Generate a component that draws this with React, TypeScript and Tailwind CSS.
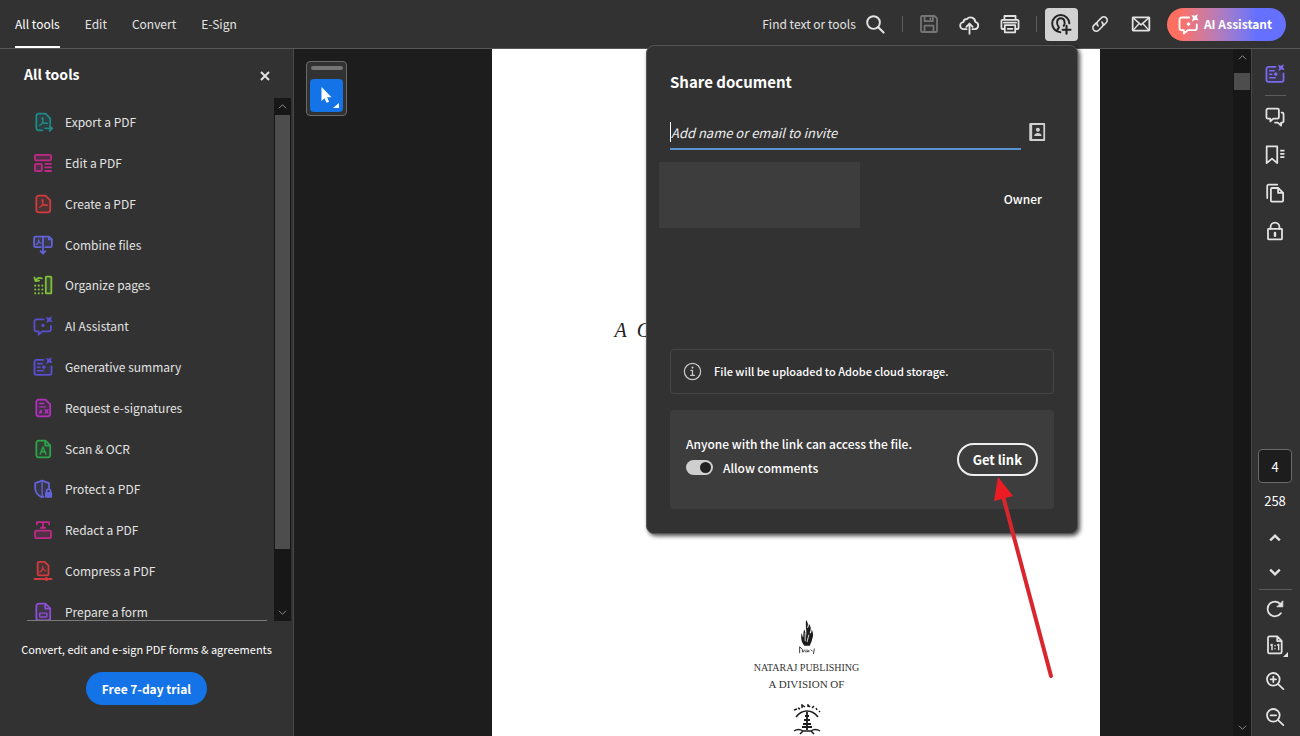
import { useState, type ReactNode } from "react";

const DOC = "M5 1.5h6.2l4.3 4.3v8.7a2 2 0 0 1-2 2H5a2 2 0 0 1-2-2v-11a2 2 0 0 1 2-2z";
const SPARK = "M11.6.8l2.6.8L17 .2l-.8 2.8 1.4 2.6-2.8-.6-2.8 1.4.8-2.9z";
const ACRO = "M5.8 12.2c2.2-1 3.7-4 3.2-6.6-.1-.8-.9-.7-.9.1.1 2.6 2 4.7 4.3 4.9.8 0 .8-.9 0-.9-2.3-.2-5 .9-6.6 2.5z";

function Icon({ children, className = "size-5" }: { children: ReactNode; className?: string }) {
  return (
    <svg viewBox="0 0 18 18" fill="none" stroke="currentColor" strokeWidth="1.6" strokeLinecap="round" strokeLinejoin="round" className={className} aria-hidden="true">
      {children}
    </svg>
  );
}

function ChatSparkIcon({ className }: { className?: string }) {
  return (
    <Icon className={className}>
      <path d="M9.5 3H3.2a1.9 1.9 0 0 0-1.9 1.9v7a1.9 1.9 0 0 0 1.9 1.9H5v3l3.5-3h5.7a1.9 1.9 0 0 0 1.9-1.9V9" />
      <path d={SPARK} fill="currentColor" stroke="none" />
      <path d="M9 6.8l1.8 1.8L9 10.400 7.200 8.600z" fill="currentColor" stroke="none" />
    </Icon>
  );
}

function SummaryIcon({ className }: { className?: string }) {
  return (
    <Icon className={className}>
      <path d="M9.5 2.500H3.200a1.900 1.900 0 0 0-1.900 1.900v9.700A1.900 1.900 0 0 0 3.200 16h11.600a1.900 1.900 0 0 0 1.900-1.900V8.500" fill="currentColor" fillOpacity=".12" />
      <path d="M4.200 6h4M4.200 9.200h2M4.200 12.400h5" strokeWidth="1.400" />
      <path d={SPARK} fill="currentColor" stroke="none" />
      <path d="M9.700 7.300l1.900 1.900-1.900 1.900-1.900-1.900z" fill="currentColor" stroke="none" />
    </Icon>
  );
}

const tools = [
  {
    label: "Export a PDF",
    color: "text-[#1f8a8a]",
    icon: (
      <Icon>
        <path d="M8.500 16.500H5a2 2 0 0 1-2-2v-11a2 2 0 0 1 2-2h6.200l4.300 4.300v5" fill="currentColor" fillOpacity=".15" />
        <path d={ACRO} strokeWidth="1" />
        <path d="M11 14.800h6M15 12.600l2.200 2.200L15 17" />
      </Icon>
    ),
  },
  {
    label: "Edit a PDF",
    color: "text-[#c2288a]",
    icon: (
      <Icon>
        <rect x="1.700" y="1.700" width="14.600" height="5" rx="1.300" fill="currentColor" fillOpacity=".2" />
        <rect x="1.700" y="9.700" width="6.300" height="6.600" rx="1.300" fill="currentColor" fillOpacity=".2" />
        <path d="M11 9.800h5.300M11 13h5.300M11 16.200h5.300" />
      </Icon>
    ),
  },
  {
    label: "Create a PDF",
    color: "text-[#d23b3f]",
    icon: (
      <Icon>
        <path d={DOC} fill="currentColor" fillOpacity=".15" />
        <path d={ACRO} strokeWidth="1" />
      </Icon>
    ),
  },
  {
    label: "Combine files",
    color: "text-[#6263d8]",
    icon: (
      <Icon>
        <path d="M7 11H2.300A1.300 1.300 0 0 1 1 9.700v-7A1.300 1.300 0 0 1 2.300 1.400H9V9M11 11h4.700A1.300 1.300 0 0 0 17 9.700V4l-2.600-2.600H9" fill="currentColor" fillOpacity=".15" />
        <path d="M3 8.700c1.500-.9 2.300-2.500 2.100-4.400.2 1.900 1 2.900 2.100 3.200M14 1.600v2.600h2.800" strokeWidth="1" />
        <path d="M9 9v7.500M6.800 14.500L9 16.800l2.200-2.300" />
      </Icon>
    ),
  },
  {
    label: "Organize pages",
    color: "text-[#7fc13a]",
    icon: (
      <Icon>
        <rect x="11.500" y="1.500" width="5" height="15" rx=".6" fill="currentColor" fillOpacity=".15" />
        <path d="M2.500 5.200C3.500 2.800 5.500 2.200 8 3M1.300 2.200l.9 3.200 3.300-.3" />
        <path d="M2 9.500v.1M5.200 9.500v.1M8.400 9.500v.1M2 13v.1M5.200 13v.1M8.400 13v.1M2 16.400v.1M5.200 16.400v.1M8.400 16.400v.1" strokeWidth="1.900" />
      </Icon>
    ),
  },
  { label: "AI Assistant", color: "text-[#5a4fd0]", icon: <ChatSparkIcon className="size-5" /> },
  { label: "Generative summary", color: "text-[#5a4fd0]", icon: <SummaryIcon className="size-5" /> },
  {
    label: "Request e-signatures",
    color: "text-[#b130bd]",
    icon: (
      <Icon>
        <path d={DOC} fill="currentColor" fillOpacity=".15" />
        <path d="M6 5h3.500M6 8h5M6 13.500c1-3 2-3 1.300-.2M11 10.500l2.500 3M13.500 10.500l-2.500 3" strokeWidth="1.300" />
      </Icon>
    ),
  },
  {
    label: "Scan & OCR",
    color: "text-[#2fa34b]",
    icon: (
      <Icon>
        <path d={DOC} fill="currentColor" fillOpacity=".15" />
        <path d="M11 1.600v4.300h4.400" />
        <path d="M6.500 13.500L9 7.200l2.600 6.300M7.400 11.500h3.300" strokeWidth="1.300" />
      </Icon>
    ),
  },
  {
    label: "Protect a PDF",
    color: "text-[#6263d8]",
    icon: (
      <Icon>
        <path d="M9.500 15.700l-1.300.8C4 14.500 2 12 2 8.500V3.700l6.200-2.300 6.200 2.300v4.600" fill="currentColor" fillOpacity=".12" />
        <path d="M8.200 1.400v15" strokeWidth="1.200" />
        <rect x="10.800" y="11.800" width="6.400" height="5" rx=".6" fill="currentColor" stroke="none" />
        <path d="M12.300 12v-1.200a1.700 1.700 0 0 1 3.400 0V12" />
      </Icon>
    ),
  },
  {
    label: "Redact a PDF",
    color: "text-[#c2288a]",
    icon: (
      <Icon>
        <path d="M3.500 4V2h11v2M9 2v5M7 7h4" />
        <rect x="1.800" y="9.500" width="14.400" height="6.800" rx="1.300" fill="currentColor" fillOpacity=".2" />
      </Icon>
    ),
  },
  {
    label: "Compress a PDF",
    color: "text-[#d23b3f]",
    icon: (
      <Icon>
        <path d="M5.500.8h5L14 4.200v7.500a1.300 1.300 0 0 1-1.300 1.300H5.500a1.300 1.300 0 0 1-1.300-1.300V2.100A1.300 1.300 0 0 1 5.500.8z" fill="currentColor" fillOpacity=".15" />
        <path d="M6 10.200c1.800-1 2.900-3 2.700-5.200.2 2.500 1.500 3.700 3 3.900" strokeWidth="1" />
        <path d="M1.300 16.200h15.400" />
        <circle cx="12" cy="16.200" r="1.700" fill="currentColor" stroke="none" />
      </Icon>
    ),
  },
  {
    label: "Prepare a form",
    color: "text-[#8c4fd0]",
    icon: (
      <Icon>
        <path d={DOC} fill="currentColor" fillOpacity=".15" />
        <path d="M11 1.600v4.300h4.400" />
        <rect x="6" y="10" width="6.500" height="3.500" rx=".6" strokeWidth="1.300" />
      </Icon>
    ),
  },
];

function Chevron({ up = false, className }: { up?: boolean; className?: string }) {
  return (
    <svg viewBox="0 0 10 10" fill="none" stroke="currentColor" className={className} aria-hidden="true">
      <path d={up ? "M1 7l4-4 4 4" : "M1 3l4 4 4-4"} />
    </svg>
  );
}

function Header() {
  return (
    <header className="flex h-[49px] shrink-0 items-center justify-between border-b border-[#585858] bg-[#323232] pr-[14px] pl-[15px]">
      <nav className="flex h-full gap-[25px]">
        <a href="#all-tools" className="flex h-full items-center border-b-2 border-white pt-px text-white">All tools</a>
        {["Edit", "Convert", "E-Sign"].map((tab) => (
          <a key={tab} href={`#${tab}`} className="flex h-full items-center border-b-2 border-transparent pt-px">{tab}</a>
        ))}
      </nav>
      <div className="flex items-center">
        <button className="flex items-center gap-2">
          Find text or tools
          <Icon className="size-[22px]">
            <circle cx="7.800" cy="7.800" r="5.200" />
            <path d="M11.700 11.700l4.300 4.300" strokeWidth="1.700" />
          </Icon>
        </button>
        <span className="mx-4 h-4 w-px bg-[#5c5c5c]" />
        <div className="flex items-center gap-5">
          <button aria-label="Save" className="text-[#767676]">
            <Icon>
              <path d="M2.500 1.800h11.500l2.200 2.200v11a1.200 1.200 0 0 1-1.200 1.200H3a1.200 1.200 0 0 1-1.200-1.200V2.500z" />
              <path d="M5 2v4.500h7.500V2M5 16v-5.500h8V16M10.300 3.700v1" />
            </Icon>
          </button>
          <button aria-label="Upload to cloud">
            <Icon className="size-[21px]">
              <path d="M6.500 13H4.300a3 3 0 0 1-.5-6 3 3 0 0 1 2.900-2.700A4.200 4.200 0 0 1 14 6.700a3.200 3.200 0 0 1-.4 6.300h-2.100M9 17V8.500M6.300 11L9 8.200l2.700 2.800" />
            </Icon>
          </button>
          <button aria-label="Print">
            <Icon>
              <path d="M4 5V1.800h10V5M4 13.500H2.300a1 1 0 0 1-1-1V6.300a1 1 0 0 1 1-1h13.400a1 1 0 0 1 1 1v6.200a1 1 0 0 1-1 1H14" />
              <path d="M4.300 10h9.400v6.500H4.300zM7 13.300h4.200M3.500 7.800h11" />
            </Icon>
          </button>
        </div>
        <span className="mr-2 ml-4 h-4 w-px bg-[#5c5c5c]" />
        <button aria-label="Share" className="flex size-[33px] items-center justify-center rounded-sm bg-[#d2d2d2] text-[#222]">
          <Icon className="size-[22px]">
            <path d="M15.800 8.500A7 7 0 1 0 8.500 15.700M6 14.300c.1-1 .3-1.400 1-1.900.5-.4.3-1-.2-1.500C5.200 9.200 5.200 4.300 8.800 4.300s3.700 4.300 2.400 6.200" />
            <path d="M13.500 10.500v6.500M10.300 13.700h6.500" strokeWidth="1.700" />
          </Icon>
        </button>
        <div className="flex items-center gap-[21px] px-3">
          <button aria-label="Copy link">
            <Icon>
              <g transform="translate(1.200 1.200) scale(.87)">
                <path d="M7 11c-1.600-1.600-1.500-3.500-.2-4.800l3.600-3.600a3.500 3.500 0 0 1 5 5l-2.600 2.600" />
                <path d="M11 7c1.600 1.600 1.500 3.500.2 4.800l-3.600 3.600a3.500 3.500 0 0 1-5-5l2.600-2.600" />
              </g>
            </Icon>
          </button>
          <button aria-label="Email">
            <Icon>
              <rect x="1.500" y="3" width="15" height="12" rx=".5" />
              <path d="M2 3.500l7 6.300 7-6.300M2 14.500l5-5.500M16 14.500L11 9" strokeWidth="1.300" />
            </Icon>
          </button>
        </div>
        <button className="ml-1 flex h-[33px] items-center gap-[5px] rounded-full bg-linear-to-r from-[#ff6f61] from-10% to-[#6670ff] to-75% pr-[14px] pl-[11px] font-bold text-white">
          <ChatSparkIcon className="size-[21px]" />
          AI Assistant
        </button>
      </div>
    </header>
  );
}

function Sidebar() {
  return (
    <aside className="flex w-[294px] shrink-0 flex-col border-r border-[#484848] bg-[#323232]">
      <div className="flex h-[49px] shrink-0 items-center justify-between pr-[22px] pl-6">
        <h2 className="text-sm font-bold text-white">All tools</h2>
        <button aria-label="Close panel" className="pt-1">
          <svg viewBox="0 0 12 12" className="size-3" stroke="currentColor" strokeWidth="2" aria-hidden="true">
            <path d="M2 2l8 8M10 2l-8 8" />
          </svg>
        </button>
      </div>
      <div className="flex min-h-0 flex-1 justify-between pr-0.5">
        <div className="ml-[27px] w-60 overflow-hidden border-b border-[#7a7a7a] pt-1">
          <ul className="grid h-[530px] auto-rows-fr pl-[6px]">
            {tools.map(({ label, color, icon }) => (
              <li key={label}>
                <button className="flex h-full w-full items-center gap-3">
                  <span className={color}>{icon}</span>
                  {label}
                </button>
              </li>
            ))}
          </ul>
        </div>
        <div className="flex w-[17px] flex-col items-center bg-[#171717] text-[#9a9a9a]">
          <Chevron up className="my-1 size-[9px] shrink-0" />
          <div className="h-[434px] w-[15px] bg-[#4d4d4d]" />
          <Chevron className="mt-auto mb-1 size-[9px]" />
        </div>
      </div>
      <div className="flex h-[115px] shrink-0 flex-col items-center gap-[13px] pt-[18px]">
        <p className="text-[11px] leading-5 text-white">Convert, edit and e-sign PDF forms &amp; agreements</p>
        <button className="h-[33px] rounded-full bg-[#1473e6] px-4 font-bold text-white">Free 7-day trial</button>
      </div>
    </aside>
  );
}

function DocumentView() {
  return (
    <main className="flex min-w-0 flex-1 bg-[#1d1d1d]">
      <div className="w-16 shrink-0 pt-3 pl-3">
        <div className="flex h-[55px] w-[41px] flex-col items-center gap-[9px] rounded border border-[#6a6a6a] bg-[#323232] pt-1">
          <span className="h-1 w-8 shrink-0 rounded-full bg-[#757575]" />
          <button aria-label="Select" className="flex size-[33px] shrink-0 items-center justify-center rounded-sm bg-[#1473e6] text-white">
            <svg viewBox="0 0 33 33" className="size-[33px]" fill="currentColor" aria-hidden="true">
              <path d="M11.500 8v14l3-2.800 2 4.600 2.600-1.100-2-4.500h4.400zM29 24v5h-6z" />
            </svg>
          </button>
        </div>
      </div>
      <div className="flex min-w-0 flex-1 justify-center overflow-hidden">
        <article className="flex w-[608px] shrink-0 flex-col items-center bg-white pl-[22px] font-['Liberation_Serif',serif] text-[#333]">
          <h1 className="mt-[269px] self-start pl-[101px] text-xl leading-6 text-[#222] italic">A&nbsp; G</h1>
          <svg viewBox="0 0 24 38" className="mt-[278px] h-[38px] w-6" fill="#1c1c1c" aria-hidden="true">
            <path d="M11 0c3 4 2 6 1 9 2-1 2-3 2-5 4 5 1 8 1 11 2-1 2-3 2-5 3 6 1 9 0 13l-2 5H9c-3-4-4-8-3-14 1 2 1 4 2 5 0-4 0-6 1-9 1 3 2 5 2 8 1-6-1-11 0-18z" />
            <path d="M10 14v9M14 16l-2 8" stroke="#fff" strokeWidth=".9" />
            <path d="M4 36v-7l3 3v3M8 35c0-3 3-3 2 0M12 32v3l2-2v2M16 32l2 2M20 31l-1 6" fill="none" stroke="#1c1c1c" strokeWidth=".9" />
          </svg>
          <p className="mt-[5px] text-[10px] leading-4">NATARAJ PUBLISHING</p>
          <p className="text-[11px] leading-4">A DIVISION OF</p>
          <svg viewBox="0 0 30 32" className="mt-3 h-8 w-[30px] shrink-0" fill="none" stroke="#1c1c1c" strokeWidth="1.500" aria-hidden="true">
            <path d="M4 13c6-8 16-8 22 0" />
            <path d="M2 6l3-1M6 4l2 1M10 4V1l3 2M16 3V1l2 2M20 4l2-2M24 4l1 2M27 7l1 1" />
            <path d="M15 8v18M13 12h4M12 16h6M11 20h8M10 23h10" strokeWidth="1.800" />
            <path d="M2 27c3-2 6-2 9 0M19 27c3-2 6-2 9 0M8 30l3-3h8l3 3" />
          </svg>
        </article>
      </div>
      <div className="flex w-[18px] shrink-0 flex-col items-center bg-[#171717] text-[#9a9a9a]">
        <Chevron up className="mt-1 size-[9px]" />
        <div className="mt-[11px] h-[17px] w-4 bg-[#4d4d4d]" />
        <Chevron className="mt-auto mb-1 size-[9px]" />
      </div>
    </main>
  );
}

function RightRail() {
  return (
    <aside className="flex w-[49px] shrink-0 flex-col items-center border-l border-[#484848] bg-[#323232] pr-0.5">
      <button aria-label="Generative summary" className="mt-[15px] text-[#7a69ee]">
        <SummaryIcon className="size-5" />
      </button>
      <hr className="mt-[11px] w-[21px] border-[#5c5c5c]" />
      <div className="mt-[11px] flex flex-col items-center gap-[18px]">
        <button aria-label="Comments">
          <Icon>
            <path d="M2.500 1.500h8.800a1.200 1.200 0 0 1 1.200 1.200v6.600a1.200 1.200 0 0 1-1.200 1.200H7.500L4.800 13v-2.500H2.500a1.200 1.200 0 0 1-1.200-1.200V2.700a1.200 1.200 0 0 1 1.200-1.200z" />
            <path d="M15 5h.5a1.200 1.200 0 0 1 1.200 1.200v6.600a1.200 1.200 0 0 1-1.200 1.200h-1v2.700L11.500 14H9" />
          </Icon>
        </button>
        <button aria-label="Bookmarks">
          <Icon>
            <path d="M1.500 1.300h9.500v15l-4.700-4-4.800 4z" />
            <path d="M13.700 5h3.800M13.700 8h3.800M13.700 11h3.800" strokeLinecap="butt" />
          </Icon>
        </button>
        <button aria-label="Pages">
          <Icon>
            <path d="M11 1.500H3.300A1.300 1.300 0 0 0 2 2.800v10.700M6.300 4.500h5.500l4.500 4.300v6.900a1 1 0 0 1-1 1h-9a1 1 0 0 1-1-1V5.500a1 1 0 0 1 1-1z" />
            <path d="M11.800 4.700v4.200h4.300" />
          </Icon>
        </button>
        <button aria-label="Security">
          <Icon>
            <rect x="2.700" y="7" width="12.600" height="9.500" rx=".5" />
            <path d="M5 7V5.500a4 4 0 0 1 8 0V7" />
            <path d="M9 10.800v2.500" strokeWidth="2.200" />
          </Icon>
        </button>
      </div>
      <div className="mt-auto flex flex-col items-center text-[13px] text-white">
        <input aria-label="Page number" defaultValue="4" className="h-[34px] w-[34px] rounded border border-[#6a6a6a] bg-[#1d1d1d] text-center" />
        <span className="mt-2 leading-5">258</span>
      </div>
      <div className="mt-[21px] flex flex-col items-center gap-[22px]">
        <button aria-label="Previous page"><Chevron up className="size-3 stroke-2" /></button>
        <button aria-label="Next page"><Chevron className="size-3 stroke-2" /></button>
      </div>
      <hr className="mt-[11px] w-[33px] border-[#5c5c5c]" />
      <div className="mt-[9px] mb-[9px] flex flex-col items-center gap-4">
        <button aria-label="Rotate">
          <Icon>
            <path d="M14.300 12.800A6.600 6.600 0 1 1 14 4.700" />
            <path d="M16 2v5h-5z" fill="currentColor" strokeWidth=".8" />
          </Icon>
        </button>
        <button aria-label="Actual size" className="relative">
          <Icon>
            <path d="M4 1.300h7l4 4v10a1.300 1.300 0 0 1-1.300 1.300H4a1.300 1.300 0 0 1-1.300-1.300V2.600A1.300 1.300 0 0 1 4 1.300zM11 1.500v4h4" />
            <path d="M5.300 9l1-.7v5M11.300 9l1-.7v5M9 9.500v.1M9 12.300v.1" strokeWidth="1.300" />
          </Icon>
          <svg viewBox="0 0 5 5" className="absolute -right-[3px] -bottom-[2px] size-[5px]" fill="currentColor" aria-hidden="true">
            <path d="M5 0v5H0z" />
          </svg>
        </button>
        <button aria-label="Zoom in">
          <Icon>
            <circle cx="7.500" cy="7.500" r="5.700" />
            <path d="M11.800 11.800l4.700 4.500M7.500 5v5M5 7.500h5" />
          </Icon>
        </button>
        <button aria-label="Zoom out">
          <Icon>
            <circle cx="7.500" cy="7.500" r="5.700" />
            <path d="M11.800 11.800l4.700 4.500M5 7.500h5" />
          </Icon>
        </button>
      </div>
    </aside>
  );
}

function ShareDialog() {
  const [comments, setComments] = useState(true);

  return (
    <section role="dialog" aria-labelledby="share-title" className="absolute top-[45px] right-[222px] flex w-[432px] flex-col rounded-lg border border-[#555] bg-[#323232] px-[23px] pt-6 pb-6 font-medium text-white shadow-[2px_2px_4px_rgba(0,0,0,0.7)]">
      <h2 id="share-title" className="text-[15px] leading-6 font-bold">Share document</h2>
      <div className="mt-7 flex items-start justify-between pr-[7px]">
        <div className="w-[351px] border-b-2 border-[#5a92cf] pb-[6px]">
          <input aria-label="Add name or email to invite" placeholder="Add name or email to invite" className="block h-5 w-full border-l border-white text-[13px] font-normal italic outline-none placeholder:text-[#eee]" />
        </div>
        <button aria-label="Address book" className="text-[#d0d0d0]">
          <Icon>
            <path d="M3 1.800h12.500v14.400H3z" />
            <path d="M3.500 2v14" strokeWidth="2.300" />
            <circle cx="9.800" cy="6.900" r="1.800" fill="currentColor" stroke="none" />
            <path d="M6.500 12.500c0-3.500 6.600-3.500 6.600 0z" fill="currentColor" stroke="none" />
          </Icon>
        </button>
      </div>
      <div className="mt-3 -ml-[11px] flex items-center justify-between pr-3">
        <div className="h-[66px] w-[201px] bg-[#3d3d3d]" />
        <span className="pt-2">Owner</span>
      </div>
      <div className="mt-[121px] flex h-[45px] items-center gap-3 rounded border border-[#454545] px-3 text-[11px]">
        <Icon className="size-[19px] text-[#c8c8c8]">
          <circle cx="9" cy="9" r="7.700" strokeWidth="1.200" />
          <path d="M7.500 8H9v4.500M7.300 12.700h3.500" strokeWidth="1.200" />
          <circle cx="9" cy="5.300" r="1" fill="currentColor" stroke="none" />
        </Icon>
        File will be uploaded to Adobe cloud storage.
      </div>
      <div className="mt-4 flex h-[99px] items-center justify-between rounded bg-[#3d3d3d] px-4">
        <div className="flex flex-col gap-1 pb-2">
          <p className="leading-5">Anyone with the link can access the file.</p>
          <label className="flex items-center gap-[10px] leading-5">
            <input
              type="checkbox"
              role="switch"
              checked={comments}
              onChange={(e) => setComments(e.target.checked)}
              className="flex h-[15px] w-[27px] appearance-none items-center rounded-full bg-[#cfcfcf] px-[2px] before:size-[11px] before:rounded-full before:bg-[#222] checked:justify-end"
            />
            Allow comments
          </label>
        </div>
        <button className="h-[33px] rounded-full border-2 border-[#efefef] px-[14px] text-[13px] font-bold">Get link</button>
      </div>
    </section>
  );
}

export default function App() {
  return (
    <div className="relative flex h-screen flex-col overflow-hidden font-['Noto_Sans_CJK_SC','Noto_Sans',sans-serif] text-xs text-[#e3e3e3]">
      <Header />
      <div className="flex min-h-0 flex-1">
        <Sidebar />
        <DocumentView />
        <RightRail />
      </div>
      <ShareDialog />
      <svg viewBox="0 0 66 206" className="pointer-events-none absolute top-[474px] right-[244px] h-[206px] w-[66px]" aria-hidden="true">
        <path d="M61 202L13 22" stroke="#d9262c" strokeWidth="4" strokeLinecap="round" />
        <path d="M8 3L23 22 4 27z" fill="#ed1c24" />
      </svg>
    </div>
  );
}
